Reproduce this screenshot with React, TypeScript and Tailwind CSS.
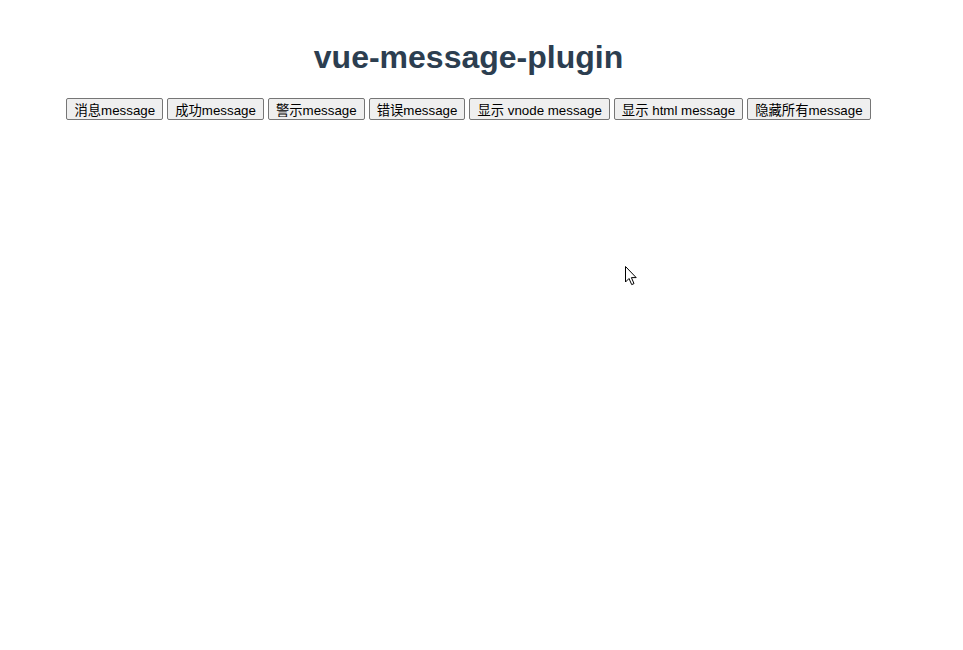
const buttons = [
  "消息message",
  "成功message",
  "警示message",
  "错误message",
  "显示 vnode message",
  "显示 html message",
  "隐藏所有message",
];

function Cursor() {
  return (
    <svg
      width="14"
      height="22"
      viewBox="0 0 14 22"
      className="absolute left-[624px] top-[265px]"
    >
      <path
        d="M1.5 1.5 L1.5 17 L5 13.5 L7.7 19.6 L10 18.6 L7.4 12.6 L12.2 12.6 Z"
        fill="#ffffff"
        stroke="#000000"
        strokeWidth="1"
        strokeLinejoin="miter"
      />
    </svg>
  );
}

export default function App() {
  return (
    <div className="relative w-[963px] h-[650px] bg-white overflow-hidden">
      <div
        className="w-[937px] pt-[39px] text-center"
        style={{ fontFamily: '"Liberation Sans", Arial, "Noto Sans CJK SC", sans-serif' }}
      >
        <h1 className="text-[32px] leading-[37px] font-bold text-[#2c3e50]">
          vue-message-plugin
        </h1>
        <div className="mt-[22px] flex justify-center gap-[4px]">
          {buttons.map((label) => (
            <button
              key={label}
              className="h-[22px] px-[7px] pt-[3px] pb-0 border border-[#767676] bg-[#efefef] rounded-[2px] text-[13.33px] leading-[17px] text-black"
              style={{ fontFamily: '"Liberation Sans", Arial, "Noto Sans CJK SC", sans-serif' }}
            >
              {label}
            </button>
          ))}
        </div>
      </div>
      <Cursor />
    </div>
  );
}
